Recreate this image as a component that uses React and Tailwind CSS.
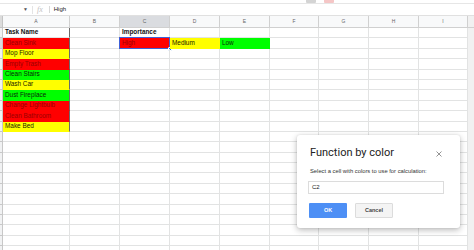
import React from "react";

const COLS = [
  { l: "A", w: 67 },
  { l: "B", w: 50 },
  { l: "C", w: 50 },
  { l: "D", w: 50 },
  { l: "E", w: 50 },
  { l: "F", w: 49 },
  { l: "G", w: 50 },
  { l: "H", w: 50 },
  { l: "I", w: 49 },
];

const RED = "red";
const YEL = "yel";
const GRN = "grn";

const taskRows = [
  { t: "Task Name", bold: true },
  { t: "Clean Sink", c: RED },
  { t: "Mop Floor", c: YEL },
  { t: "Empty Trash", c: RED },
  { t: "Clean Stairs", c: GRN },
  { t: "Wash Car", c: YEL },
  { t: "Dust Fireplace", c: GRN },
  { t: "Change Lightbulb", c: RED },
  { t: "Clean Bathroom", c: RED },
  { t: "Make Bed", c: YEL },
];

const colorCls = {
  red: "bg-[#ff0000] text-[#9a0000] border-b-[#ff0000]",
  yel: "bg-[#ffff00] text-[#1a1a00] border-b-[#ffff00]",
  grn: "bg-[#00ff00] text-[#0a2a0a] border-b-[#00ff00]",
};

function Cell({ r, ci }) {
  const base =
    "relative flex items-center overflow-visible whitespace-nowrap pl-[2px] text-[6.4px] leading-none border-r border-b border-[#e2e3e3]";
  let content = null;
  let cls = "";
  if (ci === 0 && r < 10) {
    const d = taskRows[r];
    content = d.t;
    cls = d.c ? colorCls[d.c] : "bg-white text-[#111] font-bold";
    cls += " border-r-[#6b6b6b]";
    if (r === 9) cls += " border-b-[#6b6b6b]";
  } else if (ci === 2 && r === 0) {
    content = "Importance";
    cls = "font-bold text-[#111]";
  } else if (ci === 2 && r === 1) {
    return (
      <div className={`${base} ${colorCls.red} border-r-[#ff0000]`}>
        <span>High</span>
        <div className="absolute inset-[-1px] border-[1.5px] border-[#3f5fd6]" />
        <div className="absolute right-[-3px] bottom-[-3px] h-[4px] w-[4px] rounded-[1px] border border-white bg-[#1a73e8]" />
      </div>
    );
  } else if (ci === 3 && r === 1) {
    content = "Medium";
    cls = `${colorCls.yel} border-r-[#ffff00]`;
  } else if (ci === 4 && r === 1) {
    content = "Low";
    cls = `${colorCls.grn} border-r-[#00ff00]`;
  }
  return (
    <div className={`${base} ${cls}`}>
      <span>{content}</span>
    </div>
  );
}

export default function App() {
  const rows = Array.from({ length: 22 }, (_, i) => i);
  return (
    <div
      className="relative h-[250px] w-[474px] overflow-hidden bg-white"
      style={{ fontFamily: '"Liberation Sans", Arial, sans-serif' }}
    >
      {/* toolbar strip */}
      <div className="relative h-[4px] border-b border-[#e6e6e6] bg-white">
        <div className="absolute left-[306px] top-0 h-[3px] w-[10px] rounded-b-[1px] bg-[#d4d4d4]" />
        <div className="absolute left-[324px] top-0 h-[3px] w-[10px] rounded-b-[1px] bg-[#f5c6c6]" />
      </div>
      {/* formula bar */}
      <div className="flex h-[12px] items-center border-b border-[#e0e0e0] text-[6px] text-[#333]">
        <span className="ml-[23px] text-[5px] text-[#555]">▼</span>
        <div className="ml-[4px] h-[8px] w-px bg-[#e4e4e4]" />
        <span
          className="ml-[4px] text-[8px] italic text-[#c2c2c2]"
          style={{ fontFamily: '"Liberation Serif", serif' }}
        >
          fx
        </span>
        <div className="ml-[6px] h-[7px] w-px bg-[#d8d8d8]" />
        <span className="ml-[4px] text-[6px] text-[#222]">High</span>
      </div>
      {/* grid */}
      <div className="grid grid-cols-[3px_67px_50px_50px_50px_50px_49px_50px_50px_49px_6px] grid-rows-[12px] auto-rows-[10.4px]">
        {/* header row */}
        <div className="border-r border-b border-[#c4c4c4] bg-[#dcdcdc]" />
        {COLS.map((c) => (
          <div
            key={c.l}
            className={`flex items-center justify-center border-r border-b border-[#d0d0d0] text-[5px] text-[#666] ${
              c.l === "C" ? "bg-[#dadce0] text-[#333]" : "bg-[#f8f9fa]"
            }`}
          >
            {c.l}
          </div>
        ))}
        <div className="border-b border-[#d0d0d0] bg-[#f1f1f1]" />
        {rows.map((r) => (
          <React.Fragment key={r}>
            <div
              className={`border-r border-b border-[#c8c8c8] ${
                r === 1 ? "bg-[#dadce0]" : "bg-[#f1f2f3]"
              }`}
            />
            {COLS.map((c, ci) => (
              <Cell key={c.l} r={r} ci={ci} />
            ))}
            <div className="bg-[#f1f1f1]" />
          </React.Fragment>
        ))}
      </div>

      {/* dialog */}
      <div
        className="absolute left-[297px] top-[135px] h-[93px] w-[163px] rounded-[3px] bg-white shadow-[0_2px_6px_rgba(0,0,0,0.28),0_0_2px_rgba(0,0,0,0.1)]"
      >
        <div className="flex items-start justify-between pl-[13px] pr-[18px] pt-[11px]">
          <div
            className="text-[11px] leading-[13px] text-[#222]"
            style={{ fontFamily: "Roboto, Arial, sans-serif" }}
          >
            Function by color
          </div>
          <svg width="6" height="6" viewBox="0 0 6 6" className="mt-[5px]">
            <path d="M0.5 0.5L5.5 5.5M5.5 0.5L0.5 5.5" stroke="#777" strokeWidth="0.8" />
          </svg>
        </div>
        <div className="mt-[10px] pl-[13px] text-[5.8px] leading-none text-[#333]">
          Select a cell with colors to use for calculation:
        </div>
        <div className="ml-[11px] mt-[6px] flex h-[13px] w-[136px] items-center border border-[#dcdcdc] pl-[3px] text-[6px] text-[#222]">
          C2
        </div>
        <div className="ml-[12px] mt-[9px] flex gap-[8px]">
          <div className="flex h-[15px] w-[38px] items-center justify-center rounded-[1px] bg-[#4d8ff5] text-[5.5px] font-bold text-white">
            OK
          </div>
          <div className="flex h-[15px] w-[38px] items-center justify-center rounded-[1px] border border-[#dcdcdc] bg-[#f4f4f4] text-[5.5px] font-bold text-[#444]">
            Cancel
          </div>
        </div>
      </div>
    </div>
  );
}
